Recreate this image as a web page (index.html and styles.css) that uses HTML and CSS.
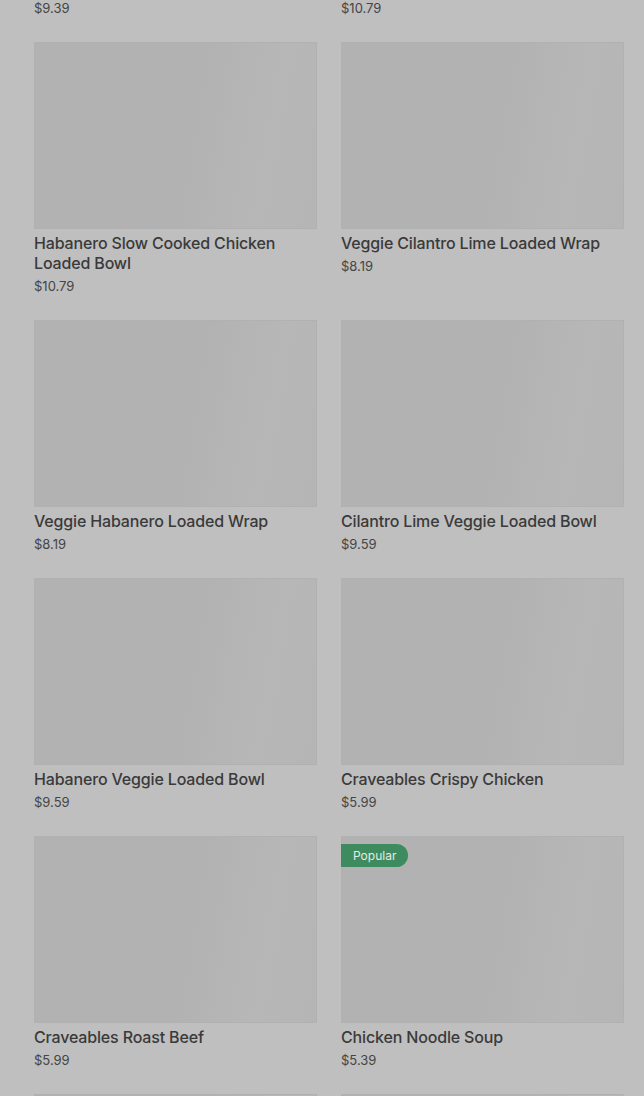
FILE: index.html
```html
<!DOCTYPE html>
<html lang="en">
<head>
    <meta charset="UTF-8">
    <meta name="viewport" content="width=device-width, initial-scale=1.0">
    <title>Menu</title>
    <link rel="stylesheet" href="styles.css">
</head>
<body>
    <div class="menu-grid">
        <div class="item item-tail">
            <div class="price">$9.39</div>
        </div>
        <div class="item item-tail">
            <div class="price">$10.79</div>
        </div>

        <div class="item">
            <div class="thumb"></div>
            <div class="title">Habanero Slow Cooked Chicken Loaded Bowl</div>
            <div class="price">$10.79</div>
        </div>
        <div class="item">
            <div class="thumb"></div>
            <div class="title">Veggie Cilantro Lime Loaded Wrap</div>
            <div class="price">$8.19</div>
        </div>

        <div class="item">
            <div class="thumb"></div>
            <div class="title">Veggie Habanero Loaded Wrap</div>
            <div class="price">$8.19</div>
        </div>
        <div class="item">
            <div class="thumb"></div>
            <div class="title">Cilantro Lime Veggie Loaded Bowl</div>
            <div class="price">$9.59</div>
        </div>

        <div class="item">
            <div class="thumb"></div>
            <div class="title">Habanero Veggie Loaded Bowl</div>
            <div class="price">$9.59</div>
        </div>
        <div class="item">
            <div class="thumb"></div>
            <div class="title">Craveables Crispy Chicken</div>
            <div class="price">$5.99</div>
        </div>

        <div class="item">
            <div class="thumb"></div>
            <div class="title">Craveables Roast Beef</div>
            <div class="price">$5.99</div>
        </div>
        <div class="item">
            <div class="thumb">
                <span class="badge">Popular</span>
            </div>
            <div class="title">Chicken Noodle Soup</div>
            <div class="price">$5.39</div>
        </div>

        <div class="item">
            <div class="thumb"></div>
        </div>
        <div class="item">
            <div class="thumb"></div>
        </div>
    </div>
</body>
</html>
```

FILE: styles.css
```css
body {
    margin: 0;
    background-color: #bfbfbf;
    font-family: Inter, "Noto Sans", Arial, sans-serif;
    color: #3a3a3a;
    overflow: hidden;
}
.menu-grid {
    display: grid;
    grid-template-columns: 283px 283px;
    column-gap: 24px;
    row-gap: 25px;
    padding: 0 20px 0 34px;
}
.item {
    display: flex;
    flex-direction: column;
}
.item-tail {
    margin-top: -1px;
}
.thumb {
    position: relative;
    height: 187px;
    background: linear-gradient(100deg, #b2b2b2 0%, #b2b2b2 55%, #b7b7b7 80%, #b5b5b5 100%);
    box-shadow: inset 0 0 0 1px #b1b1b1;
}
.title {
    margin-top: 4px;
    font-size: 16px;
    line-height: 20px;
    font-weight: 500;
    letter-spacing: -0.01em;
    color: #3a3a3a;
}
.price {
    margin-top: 4px;
    font-size: 13px;
    line-height: 18px;
    color: #454545;
}
.item-tail .price {
    margin-top: 0;
}
.badge {
    position: absolute;
    top: 8px;
    left: 0;
    height: 23px;
    line-height: 23px;
    padding: 0 12px;
    font-size: 12px;
    color: #e4ece7;
    background-color: #3d8b5e;
    border-radius: 0 12px 12px 0;
}
```
